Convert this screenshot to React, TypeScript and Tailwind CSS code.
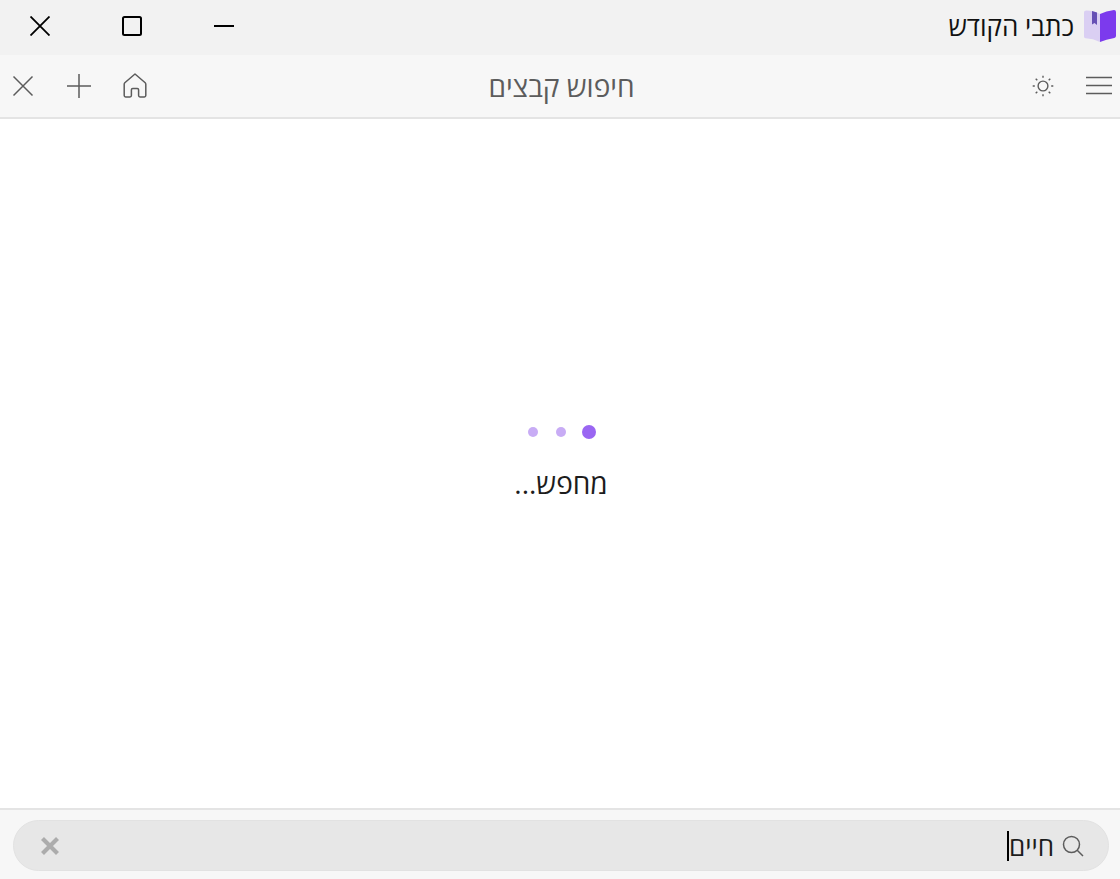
import { useState } from "react";

const iconButton = "flex items-center justify-center";

function BookLogo() {
  return (
    <svg viewBox="0 0 32 32" className="size-8" aria-hidden="true">
      <path d="M0 2.500Q0 .4 2.200.4Q10 .4 16 4V32Q9 28.500 1.600 28.200Q0 28 0 26.500Z" fill="#dacff3" />
      <path d="M16 4Q22 .8 30 0Q32 0 32 2V26Q32 27.600 30.300 27.900Q22 29.500 16 32Z" fill="#7c3aed" />
      <path d="M8 1L13 2.500V15L10.500 13L8 14.500Z" fill="#6650b5" />
    </svg>
  );
}

function TitleBar() {
  return (
    <header className="flex h-[55px] shrink-0 items-start justify-between bg-[#f2f2f2] pr-1 pl-[30px]">
      <div className="flex items-center gap-2.5 pt-2.5">
        <BookLogo />
        <h1 className="text-[26px] leading-8 text-[#111111]">כתבי הקודש</h1>
      </div>
      <div className="flex gap-[72px] pt-4 text-black">
        <button type="button" aria-label="מזער" className={iconButton}>
          <svg viewBox="0 0 20 20" className="size-5" fill="none" stroke="currentColor" strokeWidth="2">
            <path d="M0 10H20" />
          </svg>
        </button>
        <button type="button" aria-label="הגדל" className={iconButton}>
          <svg viewBox="0 0 20 20" className="size-5" fill="none" stroke="currentColor" strokeWidth="2">
            <rect x="1" y="1" width="18" height="18" rx="1.5" />
          </svg>
        </button>
        <button type="button" aria-label="סגור" className={iconButton}>
          <svg viewBox="0 0 20 20" className="size-5" fill="none" stroke="currentColor" strokeWidth="1.8">
            <path d="M.5.5L19.500 19.500M19.500.5L.5 19.500" />
          </svg>
        </button>
      </div>
    </header>
  );
}

function Toolbar() {
  return (
    <nav className="grid h-16 shrink-0 grid-cols-[1fr_auto_1fr] items-center border-b-2 border-[#e4e4e4] bg-[#f7f7f7] pr-2 pl-[11px] text-[#5c5c5c]">
      <div className="flex items-center gap-8">
        <button type="button" aria-label="תפריט" className={iconButton}>
          <svg viewBox="0 0 26 24" className="h-6 w-[26px]" fill="none" stroke="currentColor" strokeWidth="1.5">
            <path d="M0 3.500H26M0 11.500H26M0 19.500H26" />
          </svg>
        </button>
        <button type="button" aria-label="ערכת נושא" className={iconButton}>
          <svg viewBox="0 0 22 22" className="size-[22px]" fill="none" stroke="currentColor" strokeWidth="1.4">
            <circle cx="11" cy="11" r="4.900" />
            <path d="M11 .7V2.800M11 19.200V21.300M.7 11H2.800M19.200 11H21.300M3.700 3.700L5.300 5.300M16.700 16.700L18.300 18.300M3.700 18.300L5.300 16.700M16.700 5.300L18.300 3.700" />
          </svg>
        </button>
      </div>
      <h2 className="text-[28px] leading-8">חיפוש קבצים</h2>
      <div className="flex items-center justify-end gap-8">
        <button type="button" aria-label="בית" className={iconButton}>
          <svg viewBox="0 0 24 26" className="h-[26px] w-6" fill="none" stroke="currentColor" strokeWidth="1.500" strokeLinejoin="round">
            <path d="M12 1L22.200 9.800Q22.800 10.400 22.800 11.200V22.600Q22.800 24 21.400 24H17Q15.600 24 15.600 22.600V16.800Q15.600 15.400 14.200 15.400H9.800Q8.400 15.400 8.400 16.800V22.600Q8.400 24 7 24H2.600Q1.200 24 1.200 22.600V11.200Q1.200 10.400 1.800 9.800Z" />
          </svg>
        </button>
        <button type="button" aria-label="כרטיסייה חדשה" className={iconButton}>
          <svg viewBox="0 0 24 24" className="size-6" fill="none" stroke="currentColor" strokeWidth="1.500">
            <path d="M12 0V24M0 12H24" />
          </svg>
        </button>
        <button type="button" aria-label="סגור כרטיסייה" className={iconButton}>
          <svg viewBox="0 0 24 24" className="size-6" fill="none" stroke="currentColor" strokeWidth="1.500">
            <path d="M2.500 2.500L21.500 21.500M21.500 2.500L2.500 21.500" />
          </svg>
        </button>
      </div>
    </nav>
  );
}

function SearchBar() {
  const [query, setQuery] = useState("חיים");
  return (
    <footer className="shrink-0 border-t-2 border-[#e4e4e4] bg-[#f7f7f7] pt-2.5 pr-[11px] pb-2 pl-[13px]">
      <div className="flex h-[51px] items-center rounded-full border border-[#e2e2e2] bg-[#e7e7e7] pr-6 pl-[26px]">
        <label className="flex flex-1 cursor-text items-center">
          <svg viewBox="0 0 22 22" className="ml-2 size-[22px]" fill="none" stroke="#5c5c5c" strokeWidth="1.500" role="img" aria-label="חיפוש">
            <circle cx="9.500" cy="9.500" r="8" />
            <path d="M15.200 15.200L21 21" />
          </svg>
          <input
            type="text"
            value={query}
            onChange={(event) => setQuery(event.target.value)}
            className="bg-transparent text-[26px] leading-8 text-[#1c1c1c] caret-transparent outline-none [field-sizing:content]"
          />
          <span className="h-[30px] w-0.5 bg-black" aria-hidden="true" />
        </label>
        <button type="button" aria-label="נקה" onClick={() => setQuery("")} className={iconButton}>
          <svg viewBox="0 0 20 20" className="size-5" fill="none" stroke="#acacac" strokeWidth="4.200">
            <path d="M2.500 2.500L17.500 17.500M17.500 2.500L2.500 17.500" />
          </svg>
        </button>
      </div>
    </footer>
  );
}

export default function App() {
  return (
    <div dir="rtl" className="flex min-h-screen flex-col bg-white font-['Open_Sans','Noto_Sans',sans-serif]">
      <TitleBar />
      <Toolbar />
      <main className="flex flex-1 flex-col items-center justify-center gap-6 pl-0.5" role="status">
        <div className="grid grid-cols-3 place-items-center gap-3.5" aria-hidden="true">
          <span className="size-3.5 rounded-full bg-[#9a66f2]" />
          <span className="size-2.5 rounded-full bg-[#c8acf5]" />
          <span className="size-2.5 rounded-full bg-[#c8acf5]" />
        </div>
        <p className="text-[28px] leading-10 text-[#1c1c1c]">מחפש...</p>
      </main>
      <SearchBar />
    </div>
  );
}
